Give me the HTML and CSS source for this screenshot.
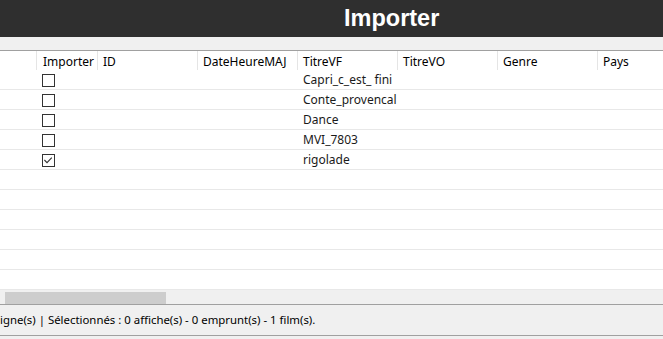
FILE: index.html
```html
<!DOCTYPE html>
<html lang="fr">
<head>
<meta charset="utf-8">
<link rel="stylesheet" href="styles.css">
</head>
<body>
<div class="app">
  <header class="titlebar"><h1 class="title">Importer</h1></header>
  <div class="band"></div>
  <div class="grid">
    <div class="row head">
      <div class="cell rh"></div>
      <div class="cell c-imp">Importer</div>
      <div class="cell c">ID</div>
      <div class="cell c">DateHeureMAJ</div>
      <div class="cell c">TitreVF</div>
      <div class="cell c">TitreVO</div>
      <div class="cell c">Genre</div>
      <div class="cell c">Pays</div>
    </div>
    <div class="row"><div class="cell rh"></div><div class="cell c-imp"><span class="box"></span></div><div class="cell c"></div><div class="cell c"></div><div class="cell c">Capri_c_est_ fini</div><div class="cell c"></div><div class="cell c"></div><div class="cell c"></div></div>
    <div class="row"><div class="cell rh"></div><div class="cell c-imp"><span class="box"></span></div><div class="cell c"></div><div class="cell c"></div><div class="cell c">Conte_provencal</div><div class="cell c"></div><div class="cell c"></div><div class="cell c"></div></div>
    <div class="row"><div class="cell rh"></div><div class="cell c-imp"><span class="box"></span></div><div class="cell c"></div><div class="cell c"></div><div class="cell c">Dance</div><div class="cell c"></div><div class="cell c"></div><div class="cell c"></div></div>
    <div class="row"><div class="cell rh"></div><div class="cell c-imp"><span class="box"></span></div><div class="cell c"></div><div class="cell c"></div><div class="cell c">MVI_7803</div><div class="cell c"></div><div class="cell c"></div><div class="cell c"></div></div>
    <div class="row"><div class="cell rh"></div><div class="cell c-imp"><span class="box"><svg viewBox="0 0 12 12" width="12" height="12"><path d="M2.4 6 L5 8.6 L9.8 3.6" fill="none" stroke="#333" stroke-width="1.1"/></svg></span></div><div class="cell c"></div><div class="cell c"></div><div class="cell c">rigolade</div><div class="cell c"></div><div class="cell c"></div><div class="cell c"></div></div>
    <div class="row empty"></div>
    <div class="row empty"></div>
    <div class="row empty"></div>
    <div class="row empty"></div>
    <div class="row empty"></div>
    <div class="row empty"></div>
  </div>
  <div class="hscroll"><div class="thumb"></div></div>
  <footer class="status">igne(s) | Sélectionnés : 0 affiche(s) - 0 emprunt(s) - 1 film(s).</footer>
  <div class="bottom"></div>
</div>
</body>
</html>
```
FILE: styles.css
```css
html, body {
  margin: 0;
  padding: 0;
  width: 663px;
  height: 339px;
  overflow: hidden;
  background: #f0f0f0;
}
.app {
  font-family: "Noto Sans", "Open Sans", sans-serif;
  font-size: 12px;
  color: #000;
  width: 663px;
  overflow: hidden;
}
.titlebar {
  height: 37px;
  background: #2f2f2f;
  display: flex;
  align-items: center;
  padding-left: 344px;
}
.title {
  margin: 0;
  font-family: "Liberation Sans", Arial, sans-serif;
  font-weight: bold;
  font-size: 23.5px;
  color: #fff;
}
.band {
  height: 13px;
  background: #f0f0f0;
  border-bottom: 1px solid #a0a0a0;
}
.grid {
  background: #fff;
  width: 700px;
}
.row {
  display: flex;
  height: 19px;
  border-bottom: 1px solid #e8e8e8;
}
.row.head {
  border-bottom: none;
}
.cell {
  flex: none;
  width: 100px;
  box-sizing: border-box;
  padding-left: 5px;
  display: flex;
  align-items: center;
  white-space: nowrap;
  line-height: 19px;
  color: #1a1a1a;
}
.cell.rh {
  width: 37px;
  padding: 0;
}
.cell.c-imp {
  width: 61px;
  padding-left: 6px;
}
.head .cell {
  border-right: 1px solid #e5e5e5;
  color: #000;
  padding-top: 1px;
}
.box {
  width: 11px;
  height: 11px;
  border: 1px solid #333;
  background: #fff;
  display: block;
  margin-top: 2px;
  margin-left: -1px;
}
.box svg {
  display: block;
  margin: -1px 0 0 -1px;
}
.hscroll {
  height: 15px;
  background: #f0f0f0;
  padding-top: 2px;
  box-sizing: border-box;
  border-bottom: 1px solid #a0a0a0;
  padding-left: 5px;
}
.thumb {
  width: 161px;
  height: 12px;
  background: #cdcdcd;
}
.status {
  height: 30px;
  line-height: 30px;
  background: #f0f0f0;
  border-bottom: 1px solid #a0a0a0;
  white-space: nowrap;
  color: #000;
  font-size: 11.4px;
}
.bottom {
  height: 4px;
  background: #f0f0f0;
}
```
